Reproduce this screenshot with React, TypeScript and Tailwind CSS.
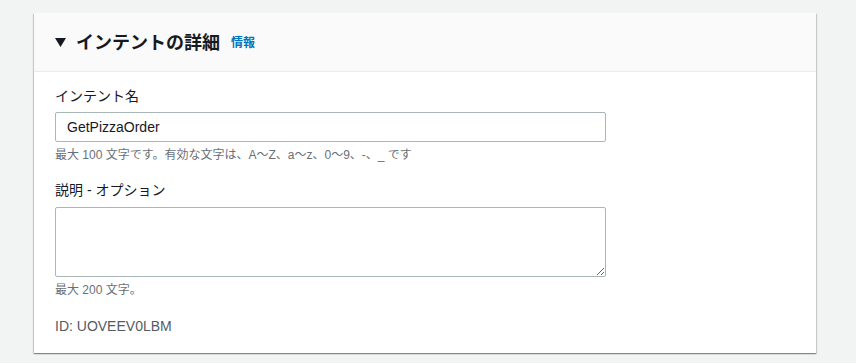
import React from 'react';

const font = { fontFamily: '"Liberation Sans", "Noto Sans CJK JP", sans-serif' };

export default function App() {
  return (
    <div className="min-h-[363px] w-full bg-[#f2f3f3] pt-[13px] pl-[34px]" style={font}>
      <div className="w-[782px] bg-white shadow-[0_1px_1px_0_rgba(0,28,36,0.3),1px_1px_1px_0_rgba(0,28,36,0.15),-1px_1px_1px_0_rgba(0,28,36,0.15)]">
        {/* Header */}
        <div className="flex h-[59px] items-center border-b border-[#eaeded] bg-[#fafafa] pl-[21px] pt-[1px]">
          <svg width="11" height="9" viewBox="0 0 11 9" className="mr-[10px]">
            <polygon points="0,0 11,0 5.5,9" fill="#16191f" />
          </svg>
          <h2 className="text-[18px] font-bold leading-[22px] text-[#16191f]">インテントの詳細</h2>
          <a className="ml-[11px] text-[12px] font-bold text-[#0073bb]">情報</a>
        </div>

        {/* Body */}
        <div className="px-[21px] pt-[13px] pb-[16px]">
          <label className="block text-[14px] leading-[22px] text-[#16191f]">インテント名</label>
          <input
            readOnly
            value="GetPizzaOrder"
            className="mt-[5px] block h-[30px] w-[551px] rounded-[2px] border border-[#aab7b8] px-[11px] text-[14px] text-[#16191f] outline-none"
            style={font}
          />
          <p className="mt-[5px] text-[12px] leading-[16px] text-[#687078]">
            最大 100 文字です。有効な文字は、A〜Z、a〜z、0〜9、-、_ です
          </p>

          <label className="mt-4 block text-[14px] leading-[22px] text-[#16191f]">説明 - オプション</label>
          <textarea
            readOnly
            className="mt-[6px] block h-[70px] w-[551px] rounded-[2px] border border-[#aab7b8] px-[11px] text-[14px] outline-none"
            style={font}
          />
          <p className="mt-[5px] text-[12px] leading-[16px] text-[#687078]">最大 200 文字。</p>

          <p className="mt-[17px] text-[14px] leading-[22px] text-[#545b64]">ID: UOVEEV0LBM</p>
        </div>
      </div>
    </div>
  );
}
